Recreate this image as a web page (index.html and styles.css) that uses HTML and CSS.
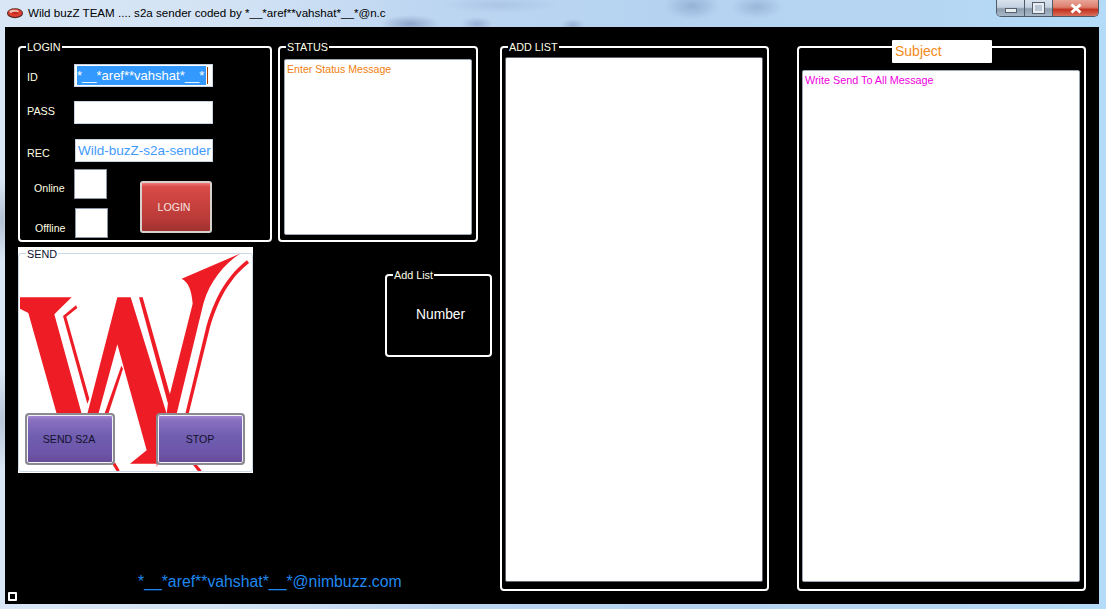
FILE: index.html
```html
<!DOCTYPE html>
<html lang="en">
<head>
<meta charset="utf-8">
<title>Wild buzZ TEAM</title>
<link rel="stylesheet" href="styles.css">
</head>
<body>
<div class="window">
  <header class="titlebar">
    <svg class="app-icon" width="18" height="12" viewBox="0 0 18 12"><ellipse cx="9" cy="6.3" rx="8" ry="5" fill="#5a2a24"/><ellipse cx="9" cy="6" rx="7" ry="3.9" fill="#dc3f30"/><ellipse cx="8" cy="4.4" rx="4.6" ry="1.6" fill="#eec4b4"/><ellipse cx="9" cy="6" rx="3.2" ry="1.2" fill="#c9281e"/></svg>
    <span class="title">Wild buzZ TEAM .... s2a sender coded by *__*aref**vahshat*__*@n.c</span>
    <div class="controls">
      <div class="ctl ctl-min"><span class="glyph-min"></span></div>
      <div class="ctl ctl-max"><span class="glyph-max"></span></div>
      <div class="ctl ctl-close"><svg width="14" height="11" viewBox="0 0 14 11"><path d="M2.5 1.5 L11.5 9.5 M11.5 1.5 L2.5 9.5" stroke="#fff" stroke-width="3"/></svg></div>
    </div>
  </header>
  <main class="client">
    <div class="col-left">
      <section class="panel login">
        <span class="legend">LOGIN</span>
        <div class="row row-id"><label class="lbl">ID</label><div class="field"><span class="selected">*__*aref**vahshat*__*</span><i class="caret"></i></div></div>
        <div class="row row-pass"><label class="lbl">PASS</label><div class="field"></div></div>
        <div class="row row-rec"><label class="lbl">REC</label><div class="field field-rec">Wild-buzZ-s2a-sender</div></div>
        <div class="status-row">
          <div class="checks">
            <div class="check-row"><span class="check-lbl online">Online</span><span class="check-box"></span></div>
            <div class="check-row check-off"><span class="check-lbl offline">Offline</span><span class="check-box"></span></div>
          </div>
          <button class="btn btn-login">LOGIN</button>
        </div>
      </section>
      <section class="send">
        <svg class="logo" viewBox="54 21 705 676" aria-hidden="true">
          <path fill="#ee1c25" d="M60 171 L215 171 L163 222 L245 520 L262 520 L352 171 L392 171 L500 520 L505 480 L578 190 C575 150 565 125 545 115 L720 40 C675 70 630 120 610 190 L530 520 L470 680 L470 670 L390 670 L440 630 L352 312 L290 540 L170 520 L85 218 L60 205 Z"/>
          <path fill="#ee1c25" d="M228 195 L232 203 L199 229 L268 475 L262 490 L189 227 Z"/>
          <path fill="#ee1c25" d="M364 376 L369 385 L322 530 L310 530 Z"/>
          <path fill="#ee1c25" d="M417 171 L428 171 L512 470 L504 490 Z"/>
          <path fill="#ee1c25" d="M741 60 L747 68 C700 105 660 160 630 260 L566 520 L556 520 L620 255 C650 155 690 100 741 60 Z"/>
          <path fill="#ee1c25" d="M335 668 L346 668 L358 688 L358 693 L350 693 Z M575 668 L586 668 L604 690 L604 693 L594 693 Z"/>
        </svg>
        <div class="send-frame"></div>
        <span class="legend legend-send">SEND</span>
        <div class="send-btns">
          <button class="btn btn-purple btn-s2a">SEND S2A</button>
          <button class="btn btn-purple btn-stop">STOP</button>
        </div>
      </section>
      <footer class="credit">*__*aref**vahshat*__*@nimbuzz.com</footer>
    </div>
    <div class="col-mid">
      <section class="panel status">
        <span class="legend">STATUS</span>
        <div class="box box-status">Enter Status Message</div>
      </section>
      <section class="panel addsmall">
        <span class="legend">Add List</span>
        <div class="number">Number</div>
      </section>
    </div>
    <section class="panel addlist">
      <span class="legend">ADD LIST</span>
      <div class="box box-list"></div>
    </section>
    <section class="panel message">
      <div class="subject">Subject</div>
      <div class="box box-msg">Write Send To All Message</div>
    </section>
    <span class="grip"></span>
  </main>
</div>
</body>
</html>
```
FILE: styles.css
```css
* { box-sizing: border-box; }
html, body { margin: 0; height: 100%; }
body { overflow: hidden; background: #b5d6f0; font-family: "Liberation Sans", Arial, sans-serif; font-size: 12px; }
.window {
  width: 1106px; height: 609px; display: flex; flex-direction: column; padding: 0 7px 6px 5px;
  background:
    radial-gradient(ellipse 30px 9px at 410px 24px, rgba(105,125,170,.55), transparent),
    radial-gradient(ellipse 16px 7px at 477px 24px, rgba(105,125,170,.4), transparent),
    radial-gradient(ellipse 12px 6px at 573px 25px, rgba(105,125,170,.4), transparent),
    radial-gradient(ellipse 28px 14px at 692px 6px, rgba(105,125,170,.4), transparent),
    radial-gradient(ellipse 26px 12px at 757px 7px, rgba(105,125,170,.35), transparent),
    radial-gradient(ellipse 60px 8px at 500px 5px, rgba(130,150,200,.25), transparent),
    radial-gradient(ellipse 9px 40px at 2px 220px, rgba(120,135,160,.4), transparent),
    radial-gradient(ellipse 9px 50px at 2px 420px, rgba(120,135,160,.35), transparent),
    linear-gradient(90deg, #d9e6f5 0, #d3e3f5 20%, #bcd5f1 40%, #b5d3f1 60%, #b5d6f3 85%, #b4dcf8 100%);
}
.titlebar { height: 27px; display: flex; align-items: flex-start; flex: none; position: relative; }
.app-icon { margin: 7px 0 0 1px; flex: none; }
.title { margin: 5px 0 0 4px; font: 11.6px/16px "Liberation Sans", Arial, sans-serif; color: #000; white-space: nowrap; }
.controls {
  position: absolute; right: 0; top: 0; width: 103px; height: 17px; display: flex;
  border: 1px solid #4d5a68; border-top: 0; border-radius: 0 0 5px 5px; overflow: hidden;
}
.ctl { display: flex; align-items: center; justify-content: center; height: 100%; background: linear-gradient(#d8e3ee 0, #c4d2e0 45%, #8d9dae 55%, #a8b8c8 100%); }
.ctl-min { width: 28px; border-right: 1px solid #4d5a68; }
.ctl-max { width: 28px; border-right: 1px solid #4d5a68; }
.ctl-close { flex: 1; background: linear-gradient(#e8a598 0, #dd7e6c 45%, #c2321e 60%, #d9705c 100%); }
.glyph-min { width: 12px; height: 5px; margin-top: 5px; background: #e9eef3; border: 1px solid #55606c; }
.glyph-max { width: 11px; height: 10px; background: #b9c7d5; border: 2px solid #e9eef3; outline: 1px solid #55606c; }

.client { flex: 1; background: #000; display: flex; align-items: flex-start; padding: 19px 14px 13px 13px; position: relative; color: #fff; }
.col-left { width: 254px; height: 100%; display: flex; flex-direction: column; flex: none; margin-right: 6px; }
.col-mid { width: 214px; flex: none; margin-right: 8px; }
.panel { border: 2px solid #fff; border-radius: 4px; position: relative; }
.legend { position: absolute; top: -8px; left: 6px; padding: 0 1px; background: #000; color: #fffde8; font-size: 10.8px; line-height: 14px; white-space: nowrap; }
.legend-send { background: #fff; color: #0a1030; left: 8px; top: 0; }

.login { height: 196px; padding: 16px 0 0 7px; }
.row { display: flex; align-items: center; }
.lbl { width: 47px; color: #fffde0; font-size: 10.8px; }
.field { width: 139px; height: 23px; background: #fff; border: 1px solid #c8d4e4; font-size: 13.5px; line-height: 21px; padding-left: 2px; white-space: nowrap; position: relative; }
.row-pass { margin-top: 14px; }
.row-pass .lbl { position: relative; top: -2px; }
.row-rec { margin-top: 15px; }
.row-rec .lbl { position: relative; top: 2px; }
.row-id .lbl { position: relative; top: 1px; }
.selected { display: inline-block; background: #3399ff; color: #fff; line-height: 19px; width: 129px; font-size: 13px; vertical-align: top; margin-top: 1px; }
.caret { position: absolute; left: 132px; top: 2px; width: 1px; height: 17px; background: #a04000; }
.field-rec { width: 138px; margin-left: 1px; color: #3f9bff; padding-left: 2px; }
.status-row { display: flex; margin-top: 7px; }
.checks { width: 113px; flex: none; }
.check-row { display: flex; height: 30px; align-items: stretch; }
.check-off { margin-top: 9px; margin-left: 1px; }
.check-lbl { width: 47px; color: #fffde0; font-size: 10.6px; padding-left: 7px; }
.online { padding-top: 13px; }
.offline { padding-top: 14px; }
.check-box { width: 33px; background: #fff; border: 1px solid #8d96a4; }
.btn { font-family: "Liberation Sans", Arial, sans-serif; font-size: 10.6px; padding: 0; cursor: default; }
.btn-login {
  width: 72px; height: 52px; margin: 12px 0 0 0; padding-right: 4px; color: #f6e6e0;
  border: 2px solid #d8d0cc; border-radius: 3px;
  background: linear-gradient(#f07a7a 0, #d84a48 8%, #cf4542 30%, #b93a38 75%, #9f3230 100%);
}
.send { margin-top: 5px; width: 235px; height: 226px; background: #fff; position: relative; overflow: hidden; flex: none; }
.logo { position: absolute; left: 0; top: 0; width: 235px; height: 226px; }
.send-frame { position: absolute; left: 0; top: 6px; width: 235px; height: 219px; border: 1px solid #c9d8e4; border-radius: 3px; }
.send-btns { position: absolute; left: 7px; top: 166px; display: flex; gap: 41px; }
.btn-purple {
  height: 52px; color: #14102c; border: 2px solid #8a8a90; border-radius: 4px; box-shadow: inset 0 0 0 1px #f3f0f8;
  background: linear-gradient(#a98fd8 0, #8a70c0 10%, #6f5eb0 45%, #6d55a8 80%, #654a96 100%);
}
.btn-s2a { width: 90px; padding-right: 2px; }
.btn-stop { width: 89px; padding-right: 1px; }
.credit { margin-top: auto; padding-left: 120px; color: #1e88f0; font-size: 15.8px; line-height: 18px; white-space: nowrap; }

.status { height: 196px; padding: 11px 4px 5px 4px; width: 200px; }
.box { background: #fff; border: 1px solid #9ea6b4; border-radius: 2px; height: 100%; font-size: 10.6px; padding: 3px 2px; }
.box-status { color: #f08010; }
.addsmall { width: 107px; height: 83px; margin: 32px 0 0 107px; }
.number { margin: 30px 0 0 29px; font-size: 13.8px; line-height: 17px; color: #fff; }
.addlist { width: 269px; height: 545px; padding: 9px 4px 7px 3px; flex: none; }
.box-list { border-color: #60656e; }
.message { width: 289px; height: 545px; margin-left: 28px; padding: 22px 4px 7px 3px; flex: none; }
.box-msg { color: #f000e0; font-size: 10.8px; }
.subject { position: absolute; left: 93px; top: -8px; width: 100px; height: 23px; background: #fff; color: #f58a20; font-size: 14px; line-height: 22px; padding-left: 3px; border-radius: 1px; }
.grip { position: absolute; left: 3px; bottom: 3px; width: 9px; height: 9px; border: 2px solid #fff; border-radius: 1px; }
```
